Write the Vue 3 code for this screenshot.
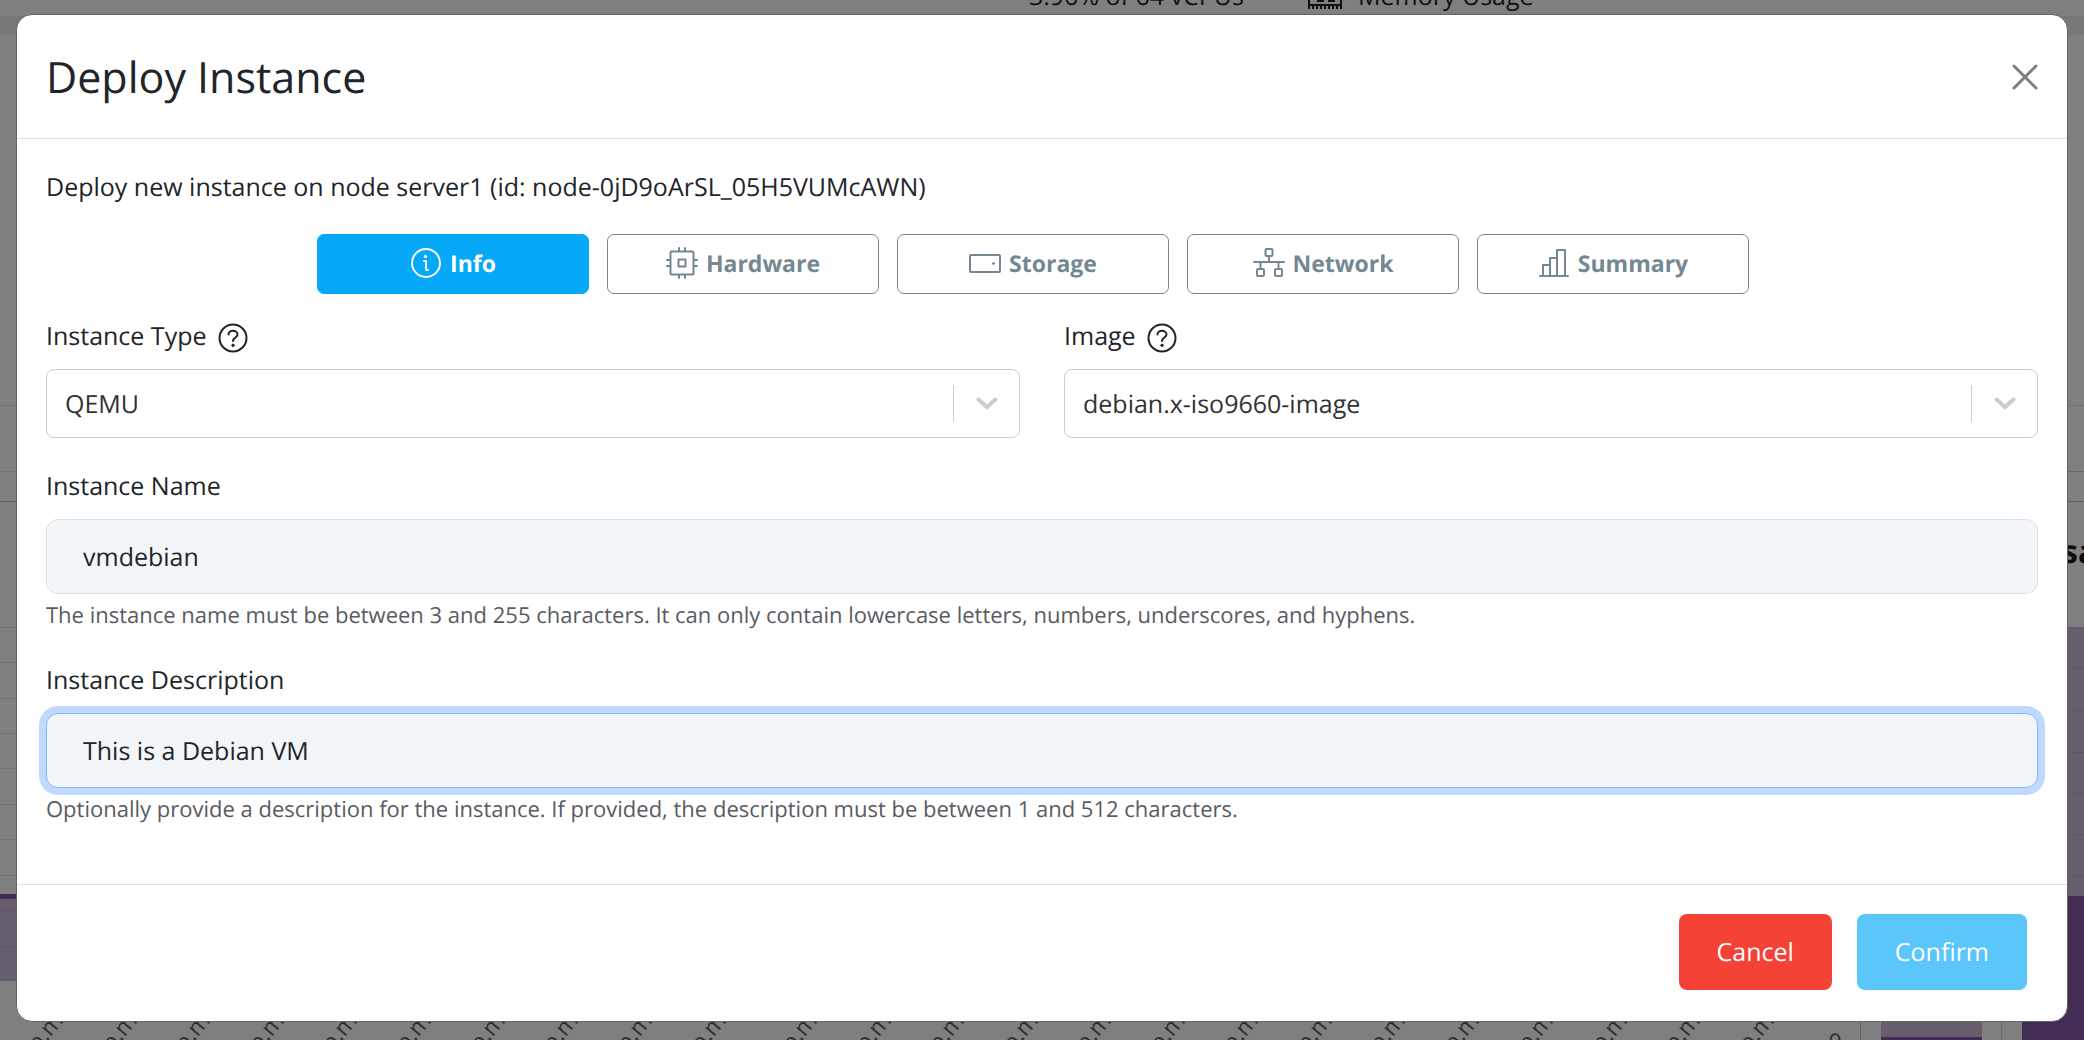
<script setup>
import { ref } from 'vue'

const activeTab = ref('info')
const tabs = [
  { id: 'info', label: 'Info' },
  { id: 'hardware', label: 'Hardware' },
  { id: 'storage', label: 'Storage' },
  { id: 'network', label: 'Network' },
  { id: 'summary', label: 'Summary' },
]
const instanceType = ref('QEMU')
const image = ref('debian.x-iso9660-image')
const name = ref('vmdebian')
const description = ref('This is a Debian VM')

// Dashboard geometry behind the dialog
const tickX = [
  51, 125, 198, 272, 345, 419, 493, 566, 640, 714, 805, 879, 952, 1026,
  1099, 1173, 1246, 1320, 1393, 1467, 1541, 1615, 1688, 1762,
]
const leftLines = [405, 471, 627, 662, 698, 733, 768, 804, 839, 875]
const rightLines = [668, 710, 752, 793, 834, 876]
</script>

<template>
  <div class="page">
    <svg class="dashboard" aria-hidden="true">
      <rect width="100%" height="100%" fill="#7f7f7f" />
      <rect y="16" width="100%" height="18" fill="#757779" />
      <text x="1244" y="5" text-anchor="end" class="stat">3.96% of 64 vCPUs</text>
      <g fill="none" stroke="#111" stroke-width="2">
        <path d="M1309 9V-10M1341 9V-10M1309 5H1341" />
        <path d="M1317 1H1324M1328 1H1335" />
        <path d="M1312 7H1341" stroke-width="4" stroke-dasharray="2 2" />
      </g>
      <text x="1358" y="5" class="stat">Memory Usage</text>

      <rect v-for="y in leftLines" :key="y" :y="y" width="30" height="1" fill="#717171" />
      <rect y="501" width="30" height="1" fill="#606060" />
      <rect y="894" width="30" height="87" fill="#665d6d" />
      <rect y="894" width="30" height="5" fill="#432c54" />
      <rect y="910" width="30" height="1" fill="#5f5567" />
      <rect y="946" width="30" height="1" fill="#5f5567" />

      <text
        v-for="x in tickX"
        :key="x"
        class="tick"
        text-anchor="middle"
        :transform="`translate(${x} 1037) rotate(-50)`"
      >p.m</text>

      <svg x="100%" overflow="visible">
        <text x="-249" y="1050" class="zero" text-anchor="middle">0</text>
        <rect x="-224" y="1000" width="1" height="60" fill="#666" />
        <rect x="-203" y="1000" width="101" height="60" fill="#665d6d" />
        <rect x="-203" y="1037" width="101" height="30" fill="#432c54" />
        <rect x="-83" y="1000" width="1" height="60" fill="#6d6d6d" />
        <rect x="-30" y="405" width="30" height="1" fill="#717171" />
        <rect x="-30" y="471" width="30" height="1" fill="#6b6b6b" />
        <rect x="-30" y="501" width="30" height="1" fill="#606060" />
        <text x="-22" y="563" class="heading">sage</text>
        <rect x="-30" y="627" width="30" height="269" fill="#665d6d" />
        <rect v-for="y in rightLines" :key="y" x="-30" :y="y" width="30" height="1" fill="#5f5567" />
        <rect x="-62" y="896" width="62" height="300" fill="#432c54" />
      </svg>
    </svg>

    <section class="modal" role="dialog" aria-labelledby="dialog-title">
      <header class="modal-header">
        <h1 id="dialog-title">Deploy Instance</h1>
        <button type="button" class="close" aria-label="Close">
          <svg width="26" height="26" viewBox="0 0 26 26">
            <path d="M2 2L24 24M24 2L2 24" stroke="#7f7f7f" stroke-width="3" stroke-linecap="round" />
          </svg>
        </button>
      </header>

      <form class="modal-body" @submit.prevent>
        <p class="lead">Deploy new instance on node server1 (id: node-0jD9oArSL_05H5VUMcAWN)</p>

        <nav class="tabs">
          <button
            v-for="tab in tabs"
            :key="tab.id"
            type="button"
            class="tab"
            :class="{ active: tab.id === activeTab }"
            @click="activeTab = tab.id"
          >
            <svg width="32" height="32" viewBox="0 0 32 32" fill="none" stroke="currentColor" stroke-width="2" stroke-linejoin="round" stroke-linecap="round">
              <template v-if="tab.id === 'info'">
                <circle cx="16" cy="16" r="14" />
                <path d="M14 14H16V23H18" />
                <circle cx="15.5" cy="9.5" r="1.2" fill="currentColor" stroke-width="1" />
              </template>
              <template v-else-if="tab.id === 'hardware'">
                <rect x="4.5" y="4.5" width="23" height="23" rx="1" />
                <rect x="12.5" y="12.5" width="7" height="7" />
                <path d="M13 4V1M19 4V1M13 31V28M19 31V28M4 13H1M4 19H1M31 13H28M31 19H28" />
              </template>
              <template v-else-if="tab.id === 'storage'">
                <rect x="1" y="8" width="30" height="17" rx="1" />
                <circle cx="24.5" cy="16.5" r="1" fill="currentColor" stroke-width="1" />
              </template>
              <template v-else-if="tab.id === 'network'">
                <rect x="12.5" y="2" width="7" height="7" rx="1" />
                <rect x="4" y="22" width="7" height="7" rx="1" />
                <rect x="22" y="22" width="7" height="7" rx="1" />
                <path d="M16 9V15M1 15H31M7.5 15V22M25.5 15V22" />
              </template>
              <template v-else>
                <path d="M2 29H30M5 29V18H12V29M12 29V11H19V29M19 29V3H27V29" />
              </template>
            </svg>
            <span>{{ tab.label }}</span>
          </button>
        </nav>

        <div class="columns">
          <div class="field">
            <div class="label-row">
              <label for="instance-type">Instance Type</label>
              <svg class="help" width="30" height="30" viewBox="0 0 30 30" fill="none" stroke="currentColor" stroke-width="2" stroke-linecap="round">
                <circle cx="15" cy="15" r="13.5" />
                <path d="M10.5 11.5C10.5 6.5 19.5 6.5 19.5 11.5C19.5 14.5 15 14.5 15 18" />
                <circle cx="15" cy="22.3" r="1.2" fill="currentColor" stroke-width="1" />
              </svg>
            </div>
            <div class="select-box">
              <select id="instance-type" v-model="instanceType">
                <option>QEMU</option>
              </select>
              <span class="indicator">
                <svg width="22" height="13" viewBox="0 0 22 13">
                  <path d="M2.5 2.5L11 10L19.5 2.5" fill="none" stroke="#ccc" stroke-width="4" stroke-linecap="round" />
                </svg>
              </span>
            </div>
          </div>
          <div class="field">
            <div class="label-row">
              <label for="image">Image</label>
              <svg class="help" width="30" height="30" viewBox="0 0 30 30" fill="none" stroke="currentColor" stroke-width="2" stroke-linecap="round">
                <circle cx="15" cy="15" r="13.5" />
                <path d="M10.5 11.5C10.5 6.5 19.5 6.5 19.5 11.5C19.5 14.5 15 14.5 15 18" />
                <circle cx="15" cy="22.3" r="1.2" fill="currentColor" stroke-width="1" />
              </svg>
            </div>
            <div class="select-box">
              <select id="image" v-model="image">
                <option>debian.x-iso9660-image</option>
              </select>
              <span class="indicator">
                <svg width="22" height="13" viewBox="0 0 22 13">
                  <path d="M2.5 2.5L11 10L19.5 2.5" fill="none" stroke="#ccc" stroke-width="4" stroke-linecap="round" />
                </svg>
              </span>
            </div>
          </div>
        </div>

        <div class="field">
          <div class="label-row"><label for="name">Instance Name</label></div>
          <input id="name" v-model="name" type="text" />
          <p class="hint">The instance name must be between 3 and 255 characters. It can only contain lowercase letters, numbers, underscores, and hyphens.</p>
        </div>

        <div class="field">
          <div class="label-row"><label for="description">Instance Description</label></div>
          <input id="description" v-model="description" class="focused" type="text" />
          <p class="hint">Optionally provide a description for the instance. If provided, the description must be between 1 and 512 characters.</p>
        </div>
      </form>

      <footer class="modal-footer">
        <button type="button" class="action cancel">Cancel</button>
        <button type="button" class="action confirm">Confirm</button>
      </footer>
    </section>
  </div>
</template>

<style>
body {
  margin: 0;
}
</style>

<style scoped>
* {
  box-sizing: border-box;
}
.page {
  position: relative;
  min-height: 100vh;
  padding: 14px 16px 18px;
  overflow: hidden;
  background: #7f7f7f;
  color: #212529;
  font-family: "Open Sans", "Noto Sans", sans-serif;
  font-size: 25px;
  line-height: 40px;
  text-rendering: geometricPrecision;
}
.dashboard {
  position: absolute;
  inset: 0;
  width: 100%;
  height: 100%;
}
.stat {
  font-size: 25px;
  fill: #111;
}
.tick,
.zero {
  font-size: 23px;
  fill: #2e2e2e;
}
.heading {
  font-size: 32px;
  font-weight: 700;
  fill: #0c0c0c;
}
.modal {
  position: relative;
  border: 1px solid #656565;
  border-radius: 16px;
  background: #fff;
}
.modal-header {
  display: flex;
  align-items: center;
  justify-content: space-between;
  height: 124px;
  padding: 0 29px;
  border-bottom: 1px solid #dee2e6;
}
h1 {
  margin: 0;
  font-size: 43px;
  line-height: 64px;
  font-weight: 400;
}
button,
input,
select {
  font: inherit;
  color: inherit;
  text-rendering: inherit;
}
.close {
  display: flex;
  padding: 0;
  border: 0;
  background: none;
}
.modal-body {
  display: block;
  padding: 28px 29px 29px;
}
p {
  margin: 0;
}
.tabs {
  display: flex;
  justify-content: center;
  margin: 27px 0 23px;
  padding-right: 18px;
  gap: 18px;
}
.tab {
  display: flex;
  align-items: center;
  justify-content: center;
  gap: 8px;
  width: 272px;
  height: 60px;
  padding: 0 0 2px;
  border: 1px solid #748892;
  border-radius: 7px;
  background: #fff;
  color: #748892;
  font-size: 23px;
  font-weight: 700;
}
.tab.active {
  border-color: #05a9f7;
  background: #05a9f7;
  color: #fff;
}
.columns {
  display: flex;
  gap: 44px;
}
.columns .field {
  flex: 1;
}
.field {
  margin-bottom: 29px;
}
.label-row {
  display: flex;
  align-items: center;
  gap: 11px;
  height: 38px;
  margin-bottom: 14px;
}
.help {
  margin-top: 4px;
}
.select-box {
  position: relative;
}
select {
  display: block;
  width: 100%;
  height: 69px;
  padding: 0 90px 0 18px;
  border: 1px solid #ccc;
  border-radius: 8px;
  background: #fff;
  color: #333;
  appearance: none;
}
.indicator {
  position: absolute;
  top: 16px;
  right: 0;
  display: flex;
  align-items: center;
  justify-content: center;
  width: 67px;
  height: 37px;
  border-left: 1px solid #ccc;
  pointer-events: none;
}
input {
  display: block;
  width: 100%;
  height: 75px;
  padding: 0 36px;
  border: 1px solid #dee2e6;
  border-radius: 12px;
  background: #f3f6f9;
  outline: none;
}
input.focused {
  border-color: #86b7fe;
  box-shadow: 0 0 0 7px #c2d9ff;
}
.hint {
  margin-top: 4px;
  color: #595c5f;
  font-size: 22px;
  line-height: 34px;
}
.modal-footer {
  display: flex;
  justify-content: flex-end;
  gap: 25px;
  padding: 29px 40px 31px;
  border-top: 1px solid #dee2e6;
}
.action {
  height: 76px;
  padding: 0 38px;
  border: 0;
  border-radius: 8px;
  color: #fff;
}
.cancel {
  background: #f44336;
}
.confirm {
  background: #5bc6f9;
}
</style>
